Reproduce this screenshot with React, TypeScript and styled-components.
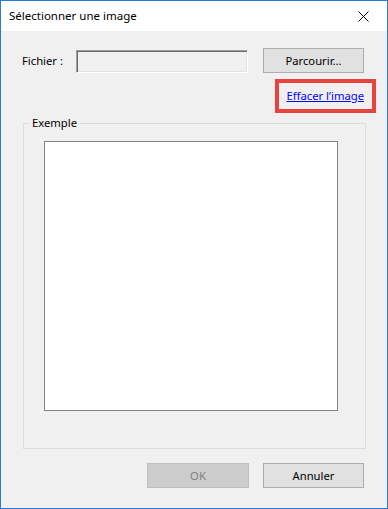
import React from "react";
import styled, { createGlobalStyle } from "styled-components";

const Global = createGlobalStyle`
  html, body { margin: 0; padding: 0; background: #f0f0f0; }
  body { font-family: "Noto Sans", "Open Sans", "Liberation Sans", sans-serif; font-size: 11.25px; color: #000; }
  * { box-sizing: border-box; }
`;

const Window = styled.div`
  width: 388px;
  height: 509px;
  border: 1px solid #2b7bd6;
  background: #f0f0f0;
  display: flex;
  flex-direction: column;
`;

const TitleBar = styled.div`
  height: 30px;
  background: #ffffff;
  display: flex;
  align-items: center;
  justify-content: space-between;
  padding: 0 18px 0 8px;
  flex-shrink: 0;
`;

const Title = styled.span`
  font-size: 11.5px;
  color: #000;
  line-height: 16px;
  margin-top: -1px;
`;

const CloseIcon = styled.svg`
  width: 11px;
  height: 11px;
  display: block;
`;

const Body = styled.div`
  display: flex;
  flex-direction: column;
  padding: 18px 23px 0 21px;
`;

const FileRow = styled.div`
  display: flex;
  align-items: center;
  height: 24px;
`;

const Label = styled.span`
  width: 54px;
  line-height: 16px;
`;

const TextInput = styled.div`
  width: 172px;
  height: 23px;
  margin-top: 1px;
  background: #f0f0f0;
  border-top: 1px solid #a0a0a0;
  border-left: 1px solid #a0a0a0;
  border-right: 1px solid #ffffff;
  border-bottom: 1px solid #ffffff;
  box-shadow: inset 1px 1px 0 #696969, inset -1px -1px 0 #e3e3e3;
`;

const Button = styled.button<{ $disabled?: boolean }>`
  width: ${(p) => (p.$disabled ? "102px" : "101px")};
  height: 25px;
  padding: 0;
  font-family: inherit;
  font-size: 11.25px;
  line-height: 16px;
  border: 1px solid ${(p) => (p.$disabled ? "#bfbfbf" : "#adadad")};
  background: ${(p) => (p.$disabled ? "#cccccc" : "#e1e1e1")};
  color: ${(p) => (p.$disabled ? "#838383" : "#000000")};
`;

const BrowseButton = styled(Button)`
  margin-left: 15px;
  height: 25px;
  margin-top: -1px;
`;

const LinkRow = styled.div`
  display: flex;
  justify-content: flex-end;
  margin-top: 6px;
  margin-right: -12px;
`;

const Highlight = styled.div`
  border: 4px solid #e8443d;
  padding: 5px 8px;
  display: flex;
`;

const Link = styled.a`
  color: #0000ff;
  text-decoration: underline;
  line-height: 16px;
  cursor: pointer;
`;

const Group = styled.fieldset`
  margin: 2px 0 0 1px;
  width: 343px;
  height: 334px;
  border: 1px solid #dcdcdc;
  padding: 10px 27px 0 20px;
`;

const Legend = styled.legend`
  margin-left: -15px;
  padding: 0 3px;
  line-height: 16px;
`;

const Preview = styled.div`
  width: 294px;
  height: 270px;
  background: #ffffff;
  border: 1px solid #828282;
`;

const Footer = styled.div`
  display: flex;
  justify-content: flex-end;
  gap: 14px;
  margin-top: 14px;
`;

export default function App() {
  return (
    <>
      <Global />
      <Window>
        <TitleBar>
          <Title>Sélectionner une image</Title>
          <CloseIcon viewBox="0 0 11 11">
            <path d="M0.5 0.5 L10.5 10.5 M10.5 0.5 L0.5 10.5" stroke="#000" strokeWidth="1" fill="none" />
          </CloseIcon>
        </TitleBar>
        <Body>
          <FileRow>
            <Label>Fichier :</Label>
            <TextInput />
            <BrowseButton>Parcourir...</BrowseButton>
          </FileRow>
          <LinkRow>
            <Highlight>
              <Link>Effacer l’image</Link>
            </Highlight>
          </LinkRow>
          <Group>
            <Legend>Exemple</Legend>
            <Preview />
          </Group>
          <Footer>
            <Button $disabled disabled>OK</Button>
            <Button>Annuler</Button>
          </Footer>
        </Body>
      </Window>
    </>
  );
}
